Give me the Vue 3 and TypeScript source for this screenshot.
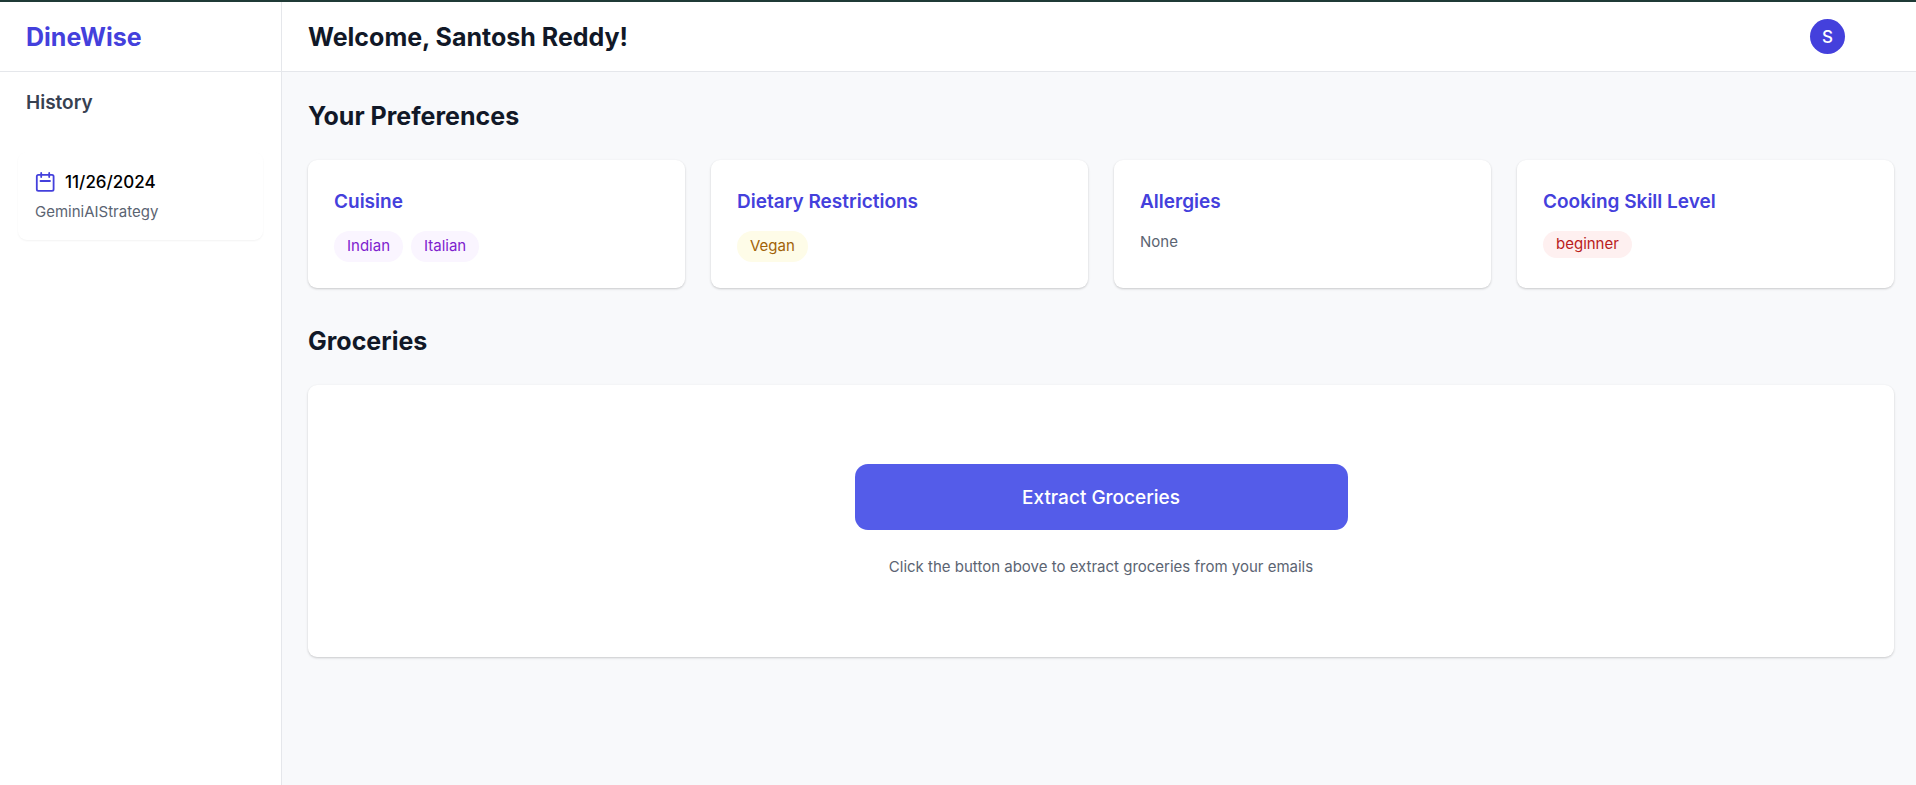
<script setup lang="ts">
interface Preference {
  title: string
  kind: 'cuisine' | 'diet' | 'allergy' | 'skill'
  values: string[]
}

interface HistoryEntry {
  date: string
  strategy: string
}

const userName = 'Santosh Reddy'

const history: HistoryEntry[] = [{ date: '11/26/2024', strategy: 'GeminiAIStrategy' }]

const preferences: Preference[] = [
  { title: 'Cuisine', kind: 'cuisine', values: ['Indian', 'Italian'] },
  { title: 'Dietary Restrictions', kind: 'diet', values: ['Vegan'] },
  { title: 'Allergies', kind: 'allergy', values: [] },
  { title: 'Cooking Skill Level', kind: 'skill', values: ['beginner'] },
]
</script>

<template>
  <div class="app">
    <aside class="sidebar">
      <div class="brand">DineWise</div>
      <h2 class="history-title">History</h2>
      <ul class="history">
        <li v-for="entry in history" :key="entry.date" class="entry">
          <div class="entry-head">
            <svg class="calendar" viewBox="0 0 20 20" aria-hidden="true">
              <rect x="1.8" y="2.8" width="16.8" height="16" rx="1.6" />
              <path d="M6.2 1v4M14.2 1v4M5.5 9h9.5" />
            </svg>
            <span class="date">{{ entry.date }}</span>
          </div>
          <p class="strategy">{{ entry.strategy }}</p>
        </li>
      </ul>
    </aside>

    <div class="content">
      <header class="topbar">
        <h1 class="heading">Welcome, {{ userName }}!</h1>
        <button class="avatar" type="button" aria-label="Account">{{ userName[0] }}</button>
      </header>

      <main class="main">
        <section>
          <h2 class="heading">Your Preferences</h2>
          <div class="grid">
            <article v-for="pref in preferences" :key="pref.title" class="card preference">
              <h3 class="card-title">{{ pref.title }}</h3>
              <p v-if="!pref.values.length" class="none">None</p>
              <ul v-else class="tags">
                <li v-for="value in pref.values" :key="value" class="tag" :class="pref.kind">
                  {{ value }}
                </li>
              </ul>
            </article>
          </div>
        </section>

        <section>
          <h2 class="heading">Groceries</h2>
          <div class="card groceries">
            <button class="extract" type="button">Extract Groceries</button>
            <p class="hint">Click the button above to extract groceries from your emails</p>
          </div>
        </section>
      </main>
    </div>
  </div>
</template>

<style>
body {
  margin: 0;
  background: #f9fafb;
}
</style>

<style scoped>
.app {
  box-sizing: border-box;
  display: flex;
  min-height: 100vh;
  border-top: 2px solid #1f3a36;
  background: #f8f9fb;
  font-family: Inter, 'Liberation Sans', sans-serif;
  font-size: 15px;
  line-height: 22px;
  color: #111827;
}

h1,
h2,
h3,
p,
ul {
  margin: 0;
  padding: 0;
}

ul {
  list-style: none;
}

button {
  border: 0;
  padding: 0;
  font-family: inherit;
  color: #fff;
  cursor: pointer;
}

.sidebar {
  box-sizing: border-box;
  flex: 0 0 282px;
  border-right: 1px solid #e5e7eb;
  background: #fff;
}

.brand,
.topbar {
  box-sizing: border-box;
  display: flex;
  align-items: center;
  height: 70px;
  border-bottom: 1px solid #e5e7eb;
  background: #fff;
}

.brand {
  padding: 0 26px;
  font-size: 25px;
  font-weight: 700;
  color: #4440dc;
}

.history-title {
  padding: 16px 26px;
  font-size: 19px;
  font-weight: 600;
  line-height: 30px;
  color: #374151;
}

.history {
  padding: 18px;
}

.entry {
  padding: 17px;
  border-radius: 9px;
  box-shadow: 0 1px 2px rgba(0, 0, 0, 0.05);
}

.entry-head {
  display: flex;
  align-items: center;
  gap: 10px;
  margin-bottom: 6px;
}

.calendar {
  width: 20px;
  height: 20px;
  fill: none;
  stroke: #4440dc;
  stroke-width: 1.8;
  stroke-linecap: round;
}

.date {
  font-size: 17px;
  font-weight: 500;
  line-height: 26px;
  color: #000;
}

.strategy,
.none,
.hint {
  color: #5b6472;
}

.content {
  flex: 1;
  min-width: 0;
}

.topbar {
  justify-content: space-between;
  padding: 0 71px 0 26px;
}

.heading {
  font-size: 25px;
  font-weight: 700;
  line-height: 36px;
}

.avatar {
  width: 35px;
  height: 35px;
  border-radius: 50%;
  background: #4440dc;
  font-size: 17px;
  font-weight: 500;
}

.main {
  display: flex;
  flex-direction: column;
  gap: 35px;
  padding: 26px 22px 26px 26px;
}

.grid {
  display: grid;
  grid-template-columns: repeat(4, 1fr);
  gap: 26px;
}

.main .heading {
  margin-bottom: 26px;
}

.card {
  border-radius: 9px;
  background: #fff;
  box-shadow: 0 1px 3px rgba(0, 0, 0, 0.1), 0 1px 2px rgba(0, 0, 0, 0.1);
}

.preference {
  padding: 26px;
}

.card-title {
  margin-bottom: 13px;
  font-size: 19px;
  font-weight: 600;
  line-height: 32px;
  color: #4440dc;
}

.tags {
  display: flex;
  flex-wrap: wrap;
  align-items: flex-start;
  gap: 8px;
}

.tag {
  padding: 4px 13px 5px;
  border-radius: 16px;
}

.cuisine {
  background: #faf5ff;
  color: #7e22ce;
}

.diet {
  background: #fefce8;
  color: #a16207;
}

.skill {
  padding: 2px 13px 3px;
  background: #fef0f0;
  color: #b91c1c;
}

.groceries {
  display: flex;
  flex-direction: column;
  align-items: center;
  gap: 26px;
  padding: 79px 26px;
}

.extract {
  width: 100%;
  max-width: 493px;
  height: 66px;
  border-radius: 13px;
  background: #545ce9;
  font-size: 19px;
  font-weight: 500;
}
</style>
